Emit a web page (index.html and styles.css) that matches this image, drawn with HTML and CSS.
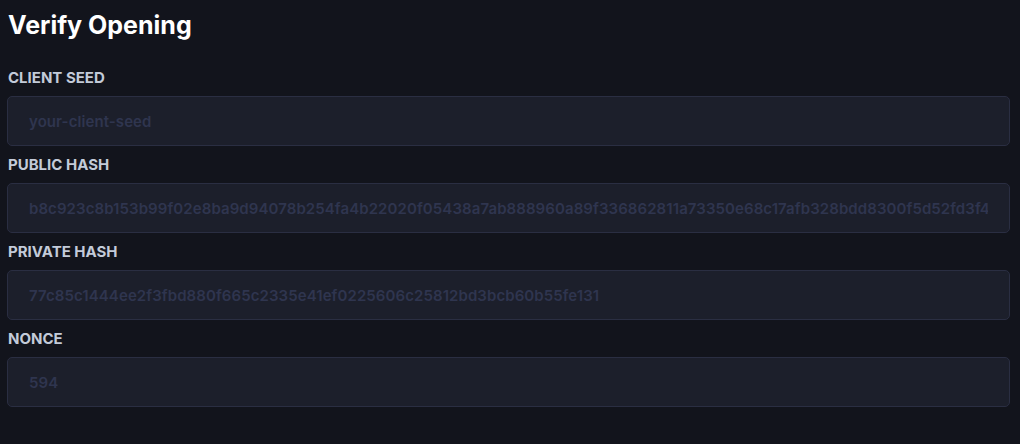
FILE: index.html
```html
<!DOCTYPE html>
<html>
<head>
  <meta charset="utf-8" />
  <title>Verify Opening</title>
  <link rel="stylesheet" href="styles.css">
</head>
<body>
  <div class="verify">
    <h1>Verify Opening</h1>

    <label for="clientSeed">Client Seed</label>
    <input type="text" id="clientSeed" placeholder="your-client-seed" />

    <label for="publicHash">Public Hash</label>
    <input type="text" id="publicHash" placeholder="b8c923c8b153b99f02e8ba9d94078b254fa4b22020f05438a7ab888960a89f336862811a73350e68c17afb328bdd8300f5d52fd3f4" />

    <label for="privateHash">Private Hash</label>
    <input type="text" id="privateHash" placeholder="77c85c1444ee2f3fbd880f665c2335e41ef0225606c25812bd3bcb60b55fe131" />

    <label for="nonce">Nonce</label>
    <input type="text" id="nonce" placeholder="594" />
  </div>
</body>
</html>
```

FILE: styles.css
```css
body {
  margin: 0;
  background-color: #12141c;
  font-family: Inter, "Liberation Sans", Arial, sans-serif;
}

.verify {
  width: 1003px;
  padding: 8px 0 0 7px;
}

h1 {
  margin: 0 0 0 1px;
  color: #fff;
  font-size: 25px;
  font-weight: 700;
  line-height: 34px;
}

label {
  display: block;
  margin: 10px 0 0 1px;
  color: #c3cbd9;
  font-size: 15px;
  font-weight: 700;
  line-height: 18px;
  text-transform: uppercase;
}

h1 + label {
  margin-top: 27px;
}

input {
  display: block;
  box-sizing: border-box;
  width: 100%;
  height: 50px;
  margin-top: 9px;
  padding: 0 21px;
  background-color: #1c1f2b;
  border: 1px solid #2a2e42;
  border-radius: 5px;
  color: #c3cbd9;
  font-family: inherit;
  font-size: 15px;
  font-weight: 600;
  letter-spacing: 0.08px;
  outline: none;
}

input::placeholder {
  color: #2f354f;
  opacity: 1;
}
```
